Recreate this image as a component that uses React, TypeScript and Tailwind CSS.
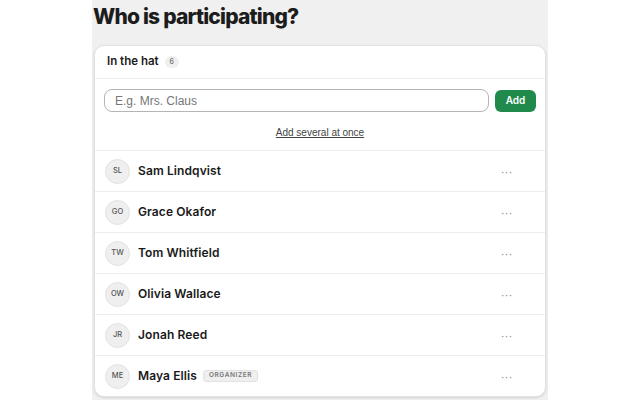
import React from "react";

const people = [
  { initials: "SL", name: "Sam Lindqvist" },
  { initials: "GO", name: "Grace Okafor" },
  { initials: "TW", name: "Tom Whitfield" },
  { initials: "OW", name: "Olivia Wallace" },
  { initials: "JR", name: "Jonah Reed" },
  { initials: "ME", name: "Maya Ellis", organizer: true },
];

const PersonRow = ({
  initials,
  name,
  organizer,
}: {
  initials: string;
  name: string;
  organizer?: boolean;
}) => (
  <div className="flex items-center h-[41px] border-t border-[#ececec] pl-[10px] pr-[32px]">
    <div className="w-[25px] h-[25px] rounded-full bg-[#efefef] border border-[#e2e2e2] flex items-center justify-center text-[7.5px] font-medium text-[#555] font-['Inter',sans-serif]">
      {initials}
    </div>
    <span className="ml-[8px] text-[12px] font-semibold text-[#1a1a1a] font-['Inter',sans-serif] tracking-[0.1px]">
      {name}
    </span>
    {organizer && (
      <span className="ml-[6px] px-[5px] h-[12px] flex items-center rounded-[3px] bg-[#efefef] border border-[#e2e2e2] text-[6.5px] font-semibold tracking-[0.6px] text-[#777] font-['Inter',sans-serif]">
        ORGANIZER
      </span>
    )}
    <span className="ml-auto text-[11px] leading-none text-[#999] tracking-[1px]">
      ···
    </span>
  </div>
);

export default function App() {
  return (
    <div className="w-full h-[400px] bg-white overflow-hidden">
      <div className="ml-[92px] w-[456px] h-[400px] bg-[#f0f0f0] px-[2px]">
        <h1 className="pt-[2px] h-[45px] text-[21px] leading-[30px] font-extrabold tracking-[-0.8px] text-[#1c1c1c] font-['Inter',sans-serif] -ml-[1px]">
          Who is participating?
        </h1>
        <div className="bg-white rounded-[10px] border border-[#e3e3e3] shadow-sm overflow-hidden">
          <div className="flex items-center h-[33px] px-[12px] border-b border-[#ececec]">
            <span className="text-[11.5px] font-semibold text-[#1a1a1a] font-['Inter',sans-serif]">
              In the hat
            </span>
            <span className="ml-[6px] w-[14px] h-[12px] rounded-full bg-[#efefef] flex items-center justify-center text-[7px] text-[#555] font-['Inter',sans-serif]">
              6
            </span>
          </div>
          <div className="px-[9px] pt-[10px] pb-[12px]">
            <div className="flex items-center gap-[6px]">
              <input
                placeholder="E.g. Mrs. Claus"
                className="flex-1 h-[23px] rounded-[8px] border border-[#b5b5b5] px-[10px] text-[12px] font-['Liberation_Sans',Arial,sans-serif] placeholder:text-[#777] outline-none"
              />
              <button className="w-[41px] h-[22px] rounded-[6px] bg-[#1f8a4c] text-white text-[10px] font-semibold font-['Inter',sans-serif]">
                Add
              </button>
            </div>
            <div className="mt-[15px] text-center text-[10px] leading-none">
              <a
                href="#"
                className="text-[10px] leading-none underline text-[#444] font-['Liberation_Sans',Arial,sans-serif]"
              >
                Add several at once
              </a>
            </div>
          </div>
          <div>
            {people.map((p) => (
              <PersonRow key={p.initials} {...p} />
            ))}
          </div>
        </div>
      </div>
    </div>
  );
}
